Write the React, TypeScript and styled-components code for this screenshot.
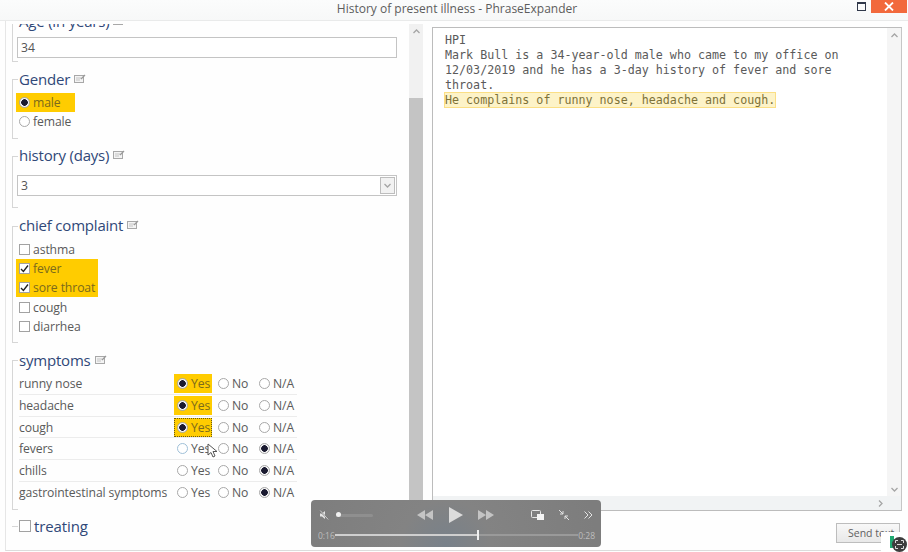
import styled, { createGlobalStyle } from 'styled-components'

const Global = createGlobalStyle`
    html, body {
        margin: 0;
        padding: 0;
        background: #fff;
    }
    body {
        font-family: "Open Sans", "Noto Sans", sans-serif;
        color: #5a5a5a;
    }
`
const Page = styled.div`
    position: relative;
    width: 908px;
    height: 552px;
    overflow: hidden;
    background: #fefefe;
`
const TitleBar = styled.div`
    position: relative;
    height: 20px;
    display: flex;
    align-items: flex-start;
    justify-content: center;
    background: linear-gradient(#fbfcfc, #f7f8f8);
    border-bottom: 1px solid #e9eaea;
`
const Title = styled.div`
    font-size: 12px;
    line-height: 18px;
    color: #5d5d5d;
    padding-left: 6px;
`
const WindowButtons = styled.div`
    position: absolute;
    top: 0;
    right: 1px;
    display: flex;
    align-items: flex-start;
    gap: 5px;
`
const MaxButton = styled.div`
    width: 7px;
    height: 6px;
    margin-top: 2px;
    border: 1px solid #30384a;
    border-top-width: 2px;
`
const CloseButton = styled.div`
    width: 36px;
    height: 13px;
    background: #f2693c;
    display: flex;
    align-items: center;
    justify-content: center;
`
const Body = styled.div`
    display: flex;
    height: 529px;
    margin: 0 1px 0 5px;
    border-left: 1px solid #e6e6e6;
    border-bottom: 1px solid #dcdcdc;
`
const LeftPane = styled.div`
    width: 417px;
    display: flex;
    padding-top: 3px;
`
const Scroller = styled.div`
    flex: 1;
    overflow: hidden;
    padding-left: 6px;
`
const Group = styled.section<{ $gap: number; $first?: boolean }>`
    position: relative;
    margin-top: ${p => (p.$first ? '-14px' : '0')};
    margin-bottom: ${p => p.$gap}px;
    padding: 0 12px 0 7px;
    &::before {
        content: '';
        position: absolute;
        left: 0;
        top: 11px;
        bottom: 0;
        width: 5px;
        border: 1px solid #d6d6d6;
        border-right: none;
    }
`
const Heading = styled.h3`
    position: relative;
    box-sizing: border-box;
    margin: 0;
    height: 23px;
    padding-bottom: 2px;
    display: flex;
    align-items: center;
    gap: 4px;
    font-size: 15px;
    letter-spacing: -0.2px;
    font-weight: 400;
    color: #304878;
`
const NoteIcon = () => (
    <svg width="12" height="10" viewBox="0 0 12 10" fill="none">
        <rect x="0.5" y="1.5" width="9" height="7" fill="#f4f4f4" stroke="#a8a8a8" />
        <path d="M2 4h5M2 6h4" stroke="#c4c4c4" />
        <path d="M7 5l4-4" stroke="#999" strokeWidth="1.3" />
    </svg>
)
const TextBox = styled.div<{ $top: number }>`
    position: relative;
    margin: ${p => p.$top}px 0 0 -2px;
    height: 19px;
    border: 1px solid #c4c4c4;
    display: flex;
    align-items: center;
    justify-content: space-between;
    padding: 0 1px 0 3px;
    font-size: 12.2px;
    color: #555;
    background: #fff;
`
const FieldBody = styled.div<{ $bottom: number }>`
    padding-bottom: ${p => p.$bottom}px;
`
const DropButton = styled.div`
    width: 13px;
    height: 15px;
    border: 1px solid #bdbdbd;
    background: #f2f2f2;
    display: flex;
    align-items: center;
    justify-content: center;
`
const OptionList = styled.div`
    position: relative;
    padding-top: 2px;
    padding-bottom: 7px;
`
const OptionRow = styled.div`
    height: 19.3px;
    display: flex;
    align-items: center;
`
const Highlight = styled.div<{ $on?: boolean; $width?: number }>`
    box-sizing: border-box;
    display: inline-flex;
    align-items: center;
    gap: 3px;
    height: 100%;
    width: ${p => (p.$width ? `${p.$width}px` : 'auto')};
    margin-left: -3px;
    padding: 0 3px;
    font-size: 12.2px;
    letter-spacing: -0.1px;
    white-space: nowrap;
    background: ${p => (p.$on ? '#ffcc00' : 'transparent')};
    color: ${p => (p.$on ? '#7b6a1c' : '#5a5a5a')};
`
const Radio = styled.span<{ $on?: boolean; $hover?: boolean }>`
    box-sizing: border-box;
    flex: none;
    width: 11px;
    height: 11px;
    border-radius: 50%;
    border: 1px solid ${p => (p.$hover ? '#9fc0d8' : '#a8a8a8')};
    background: ${p => (p.$on ? 'radial-gradient(circle, #1a1a30 0 3px, #f4f4f4 3.6px)' : '#fff')};
`
const Box = styled.span<{ $large?: boolean }>`
    box-sizing: border-box;
    flex: none;
    width: ${p => (p.$large ? 12 : 11)}px;
    height: ${p => (p.$large ? 12 : 11)}px;
    border: 1px solid #a2a2a2;
    background: #fff;
    display: flex;
    align-items: center;
    justify-content: center;
`
const CheckMark = () => (
    <svg width="9" height="9" viewBox="0 0 9 9" fill="none">
        <path d="M1 5l2.4 2.4L8 1.5" stroke="#222" strokeWidth="1.4" />
    </svg>
)
const SymptomTable = styled.div`
    position: relative;
    margin-top: 1px;
    padding-bottom: 6px;
    width: 278px;
`
const SymptomRow = styled.div`
    height: 21.8px;
    box-sizing: border-box;
    display: flex;
    align-items: center;
    font-size: 12.2px;
    letter-spacing: -0.1px;
    border-bottom: 1px solid #ececec;
    &:last-child { border-bottom: none; }
`
const SymptomName = styled.div`
    width: 155px;
    flex: none;
    white-space: nowrap;
`
const Choice = styled.div<{ $on?: boolean; $focus?: boolean }>`
    box-sizing: border-box;
    width: 38px;
    flex: none;
    height: 19px;
    display: flex;
    align-items: center;
    gap: 3px;
    padding-left: 3px;
    margin-right: 3px;
    background: ${p => (p.$on ? '#ffcc00' : 'transparent')};
    color: ${p => (p.$on ? '#7b6a1c' : '#5a5a5a')};
    outline: ${p => (p.$focus ? '1px dotted #6b5a10' : 'none')};
    outline-offset: -1px;
`
const TreatingRow = styled.div`
    position: relative;
    display: flex;
    align-items: center;
    gap: 3px;
    height: 24px;
    margin-top: 4px;
    padding-left: 7px;
    font-size: 15px;
    letter-spacing: -0.1px;
    color: #304878;
    &::before {
        content: '';
        position: absolute;
        left: 0;
        top: 12px;
        width: 6px;
        height: 1px;
        background: #d6d6d6;
    }
`
const ScrollTrack = styled.div`
    width: 14px;
    flex: none;
    display: flex;
    flex-direction: column;
    background: #f1f1f1;
    margin-bottom: 10px;
`
const ScrollArrow = styled.div`
    height: 14px;
    display: flex;
    align-items: center;
    justify-content: center;
`
const ScrollThumb = styled.div`
    margin-top: 60px;
    flex: 1;
    background: #c4c4c4;
`
const RightPane = styled.div`
    flex: 1;
    display: flex;
    flex-direction: column;
    padding: 6px 5px 0 9px;
`
const Editor = styled.div`
    height: 482px;
    display: flex;
    flex-direction: column;
    border: 1px solid #bcbcbc;
    border-right-color: #c6c6c6;
    background: #fff;
`
const EditorMain = styled.div`
    flex: 1;
    display: flex;
    min-height: 0;
`
const EditorText = styled.div`
    flex: 1;
    padding: 5px 12px;
    font-family: "DejaVu Sans Mono", "Liberation Mono", monospace;
    font-size: 11.68px;
    line-height: 15px;
    color: #5a5a5a;
`
const Marked = styled.span`
    background: #fdf3c8;
    color: #7d7238;
    outline: 1px solid #fbdf85;
`
const VScroll = styled.div`
    width: 14px;
    background: #f5f5f5;
    display: flex;
    flex-direction: column;
    justify-content: space-between;
`
const HScroll = styled.div`
    height: 14px;
    background: #f1f3f4;
    display: flex;
    align-items: center;
    justify-content: flex-end;
    padding-right: 16px;
`
const Footer = styled.div`
    flex: 1;
    display: flex;
    justify-content: flex-end;
    align-items: flex-start;
    padding: 12px 2px 0 0;
`
const SendButton = styled.div`
    box-sizing: border-box;
    width: 64px;
    height: 20px;
    border: 1px solid #bdbdbd;
    background: linear-gradient(#f8f8f8, #e8e8e8);
    font-size: 10.5px;
    line-height: 18px;
    padding-left: 11px;
    color: #606060;
    white-space: nowrap;
    overflow: hidden;
`
const Cursor = styled.svg`
    position: absolute;
    left: 207px;
    top: 443px;
`
const Player = styled.div`
    position: absolute;
    left: 311px;
    top: 500px;
    width: 290px;
    height: 47px;
    box-sizing: border-box;
    padding: 4px 6px 0 8px;
    border-radius: 4px;
    background: radial-gradient(circle at 135px 45px, #78818a 0, #838383 45px, #7d7d7d 150px);
    color: #d8d8d8;
    display: flex;
    flex-direction: column;
`
const PlayerTop = styled.div`
    height: 22px;
    display: flex;
    align-items: center;
`
const VolumeTrack = styled.div`
    position: relative;
    width: 37px;
    height: 3px;
    margin-left: 7px;
    border-radius: 2px;
    background: #8f8f8f;
`
const VolumeKnob = styled.div`
    position: absolute;
    left: 0;
    top: -1.5px;
    width: 5px;
    height: 5px;
    border-radius: 50%;
    background: #f2f2f2;
`
const Transport = styled.div`
    display: flex;
    align-items: center;
    gap: 15px;
    margin-left: 44px;
`
const PlayerExtras = styled.div`
    margin-left: auto;
    display: flex;
    align-items: center;
    gap: 15px;
    padding-right: 2px;
`
const Timeline = styled.div`
    display: flex;
    align-items: center;
    margin: 2px 0 0 -1px;
    font-size: 8.5px;
    color: #bdbdbd;
    height: 14px;
`
const TimelineBar = styled.div`
    position: relative;
    flex: 1;
    height: 2px;
    background: #9a9a9a;
`
const TimelineFill = styled.div`
    height: 100%;
    background: #cfcfcf;
`
const TimelineHandle = styled.div`
    position: absolute;
    top: -4px;
    width: 2px;
    height: 10px;
    background: #f0f0f0;
`
const Badge = styled.div`
    position: absolute;
    right: 0;
    bottom: 0;
    width: 27px;
    height: 20px;
    background: #fff;
`
const BadgeBar = styled.div`
    position: absolute;
    left: 9px;
    top: 4px;
    width: 4px;
    height: 12px;
    background: #1fa971;
`
const BadgeDot = styled.div`
    position: absolute;
    right: 1px;
    top: 5px;
    width: 15px;
    height: 15px;
    border-radius: 50%;
    background: #3d3d3d;
    display: flex;
    align-items: center;
    justify-content: center;
`

const symptoms = [
    { name: 'runny nose', answer: 'Yes' },
    { name: 'headache', answer: 'Yes' },
    { name: 'cough', answer: 'Yes' },
    { name: 'fevers', answer: 'N/A' },
    { name: 'chills', answer: 'N/A' },
    { name: 'gastrointestinal symptoms', answer: 'N/A' },
]
const complaints = [
    { name: 'asthma' },
    { name: 'fever', on: true },
    { name: 'sore throat', on: true },
    { name: 'cough' },
    { name: 'diarrhea' },
]

const Chevron = ({ d }: { d: string }) => (
    <svg width="9" height="9" viewBox="0 0 9 9" fill="none">
        <path d={d} stroke="#a5a5a5" strokeWidth="1.3" />
    </svg>
)

const App = () => {
    return (
        <Page>
            <Global />
            <TitleBar>
                <Title>History of present illness - PhraseExpander</Title>
                <WindowButtons>
                    <MaxButton />
                    <CloseButton>
                        <svg width="10" height="9" viewBox="0 0 10 9">
                            <path d="M1 .5l8 8M9 .5l-8 8" stroke="#fff" strokeWidth="1.8" />
                        </svg>
                    </CloseButton>
                </WindowButtons>
            </TitleBar>
            <Body>
                <LeftPane>
                    <Scroller>
                        <Group $first $gap={6}>
                            <Heading>Age (in years) <NoteIcon /></Heading>
                            <FieldBody $bottom={4}>
                                <TextBox $top={4}>34</TextBox>
                            </FieldBody>
                        </Group>
                        <Group $gap={6}>
                            <Heading>Gender <NoteIcon /></Heading>
                            <OptionList>
                                <OptionRow><Highlight $on $width={59}><Radio $on />male</Highlight></OptionRow>
                                <OptionRow><Highlight><Radio />female</Highlight></OptionRow>
                            </OptionList>
                        </Group>
                        <Group $gap={7}>
                            <Heading>history (days) <NoteIcon /></Heading>
                            <FieldBody $bottom={12}>
                                <TextBox $top={7}>
                                    3
                                    <DropButton>
                                        <Chevron d="M1.5 3l3 3 3-3" />
                                    </DropButton>
                                </TextBox>
                            </FieldBody>
                        </Group>
                        <Group $gap={6}>
                            <Heading>chief complaint <NoteIcon /></Heading>
                            <OptionList>
                                {complaints.map(c => (
                                    <OptionRow key={c.name}>
                                        <Highlight $on={c.on} $width={c.on ? 82 : undefined}>
                                            <Box>{c.on && <CheckMark />}</Box>
                                            {c.name}
                                        </Highlight>
                                    </OptionRow>
                                ))}
                            </OptionList>
                        </Group>
                        <Group $gap={0}>
                            <Heading>symptoms <NoteIcon /></Heading>
                            <SymptomTable>
                                {symptoms.map(s => (
                                    <SymptomRow key={s.name}>
                                        <SymptomName>{s.name}</SymptomName>
                                        {['Yes', 'No', 'N/A'].map(label => (
                                            <Choice
                                                key={label}
                                                $on={label === 'Yes' && s.answer === 'Yes'}
                                                $focus={label === 'Yes' && s.name === 'cough'}
                                            >
                                                <Radio $on={s.answer === label} $hover={s.name === 'fevers' && label === 'Yes'} />
                                                {label}
                                            </Choice>
                                        ))}
                                    </SymptomRow>
                                ))}
                            </SymptomTable>
                        </Group>
                        <TreatingRow><Box $large />treating</TreatingRow>
                    </Scroller>
                    <ScrollTrack>
                        <ScrollArrow><Chevron d="M1.5 6l3-3 3 3" /></ScrollArrow>
                        <ScrollThumb />
                    </ScrollTrack>
                </LeftPane>
                <RightPane>
                    <Editor>
                        <EditorMain>
                            <EditorText>
                                HPI<br />
                                Mark Bull is a 34-year-old male who came to my office on<br />
                                12/03/2019 and he has a 3-day history of fever and sore<br />
                                throat.<br />
                                <Marked>He complains of runny nose, headache and cough.</Marked>
                            </EditorText>
                            <VScroll>
                                <ScrollArrow><Chevron d="M1.5 6l3-3 3 3" /></ScrollArrow>
                                <ScrollArrow><Chevron d="M1.5 3l3 3 3-3" /></ScrollArrow>
                            </VScroll>
                        </EditorMain>
                        <HScroll><Chevron d="M3 1.5l3 3-3 3" /></HScroll>
                    </Editor>
                    <Footer>
                        <SendButton>Send text</SendButton>
                    </Footer>
                </RightPane>
            </Body>
            <Cursor width="11" height="16" viewBox="0 0 11 16">
                <path d="M1 1v11l3-2.5 2 4.5 2-1-2-4.5h4z" fill="#fff" stroke="#555" strokeWidth="1" />
            </Cursor>
            <Player>
                <PlayerTop>
                    <svg width="10" height="10" viewBox="0 0 10 10">
                        <path d="M1 3.5h2L6 1v8L3 6.5H1z" fill="#e4e4e4" />
                        <path d="M.5.5l9 9" stroke="#777" strokeWidth="1.2" />
                        <path d="M1.2.5l8 9" stroke="#e4e4e4" strokeWidth=".8" />
                    </svg>
                    <VolumeTrack><VolumeKnob /></VolumeTrack>
                    <Transport>
                        <svg width="16" height="10" viewBox="0 0 16 10">
                            <path d="M8 0v10L0 5zM16 0v10L8 5z" fill="#c4c4c4" />
                        </svg>
                        <svg width="15" height="16" viewBox="0 0 15 16">
                            <path d="M1 0l14 8-14 8z" fill="#dcdcdc" />
                        </svg>
                        <svg width="16" height="10" viewBox="0 0 16 10">
                            <path d="M0 0l8 5-8 5zM8 0l8 5-8 5z" fill="#c4c4c4" />
                        </svg>
                    </Transport>
                    <PlayerExtras>
                        <svg width="13" height="10" viewBox="0 0 13 10">
                            <rect x=".5" y=".5" width="9" height="7" rx="1" fill="none" stroke="#e8e8e8" />
                            <rect x="6" y="4" width="7" height="6" fill="#f4f4f4" />
                        </svg>
                        <svg width="10" height="10" viewBox="0 0 10 10" fill="none">
                            <path d="M0 0l4 4M4 1v3H1M10 10L6 6M6 9V6h3" stroke="#e4e4e4" />
                        </svg>
                        <svg width="9" height="8" viewBox="0 0 9 8" fill="none">
                            <path d="M.5.5L4 4 .5 7.5M4.5.5L8 4 4.5 7.5" stroke="#e4e4e4" />
                        </svg>
                    </PlayerExtras>
                </PlayerTop>
                <Timeline>
                    0:16
                    <TimelineBar>
                        <TimelineFill style={{ width: '58.6%' }} />
                        <TimelineHandle style={{ left: '58.6%' }} />
                    </TimelineBar>
                    0:28
                </Timeline>
            </Player>
            <Badge>
                <BadgeBar />
                <BadgeDot>
                    <svg width="9" height="9" viewBox="0 0 9 9" fill="none">
                        <path d="M.5 3V.5H3M6 .5h2.5V3M8.5 6v2.5H6M3 8.5H.5V6M2 4.5h5" stroke="#eee" strokeWidth=".9" />
                    </svg>
                </BadgeDot>
            </Badge>
        </Page>
    )
}

export default App
